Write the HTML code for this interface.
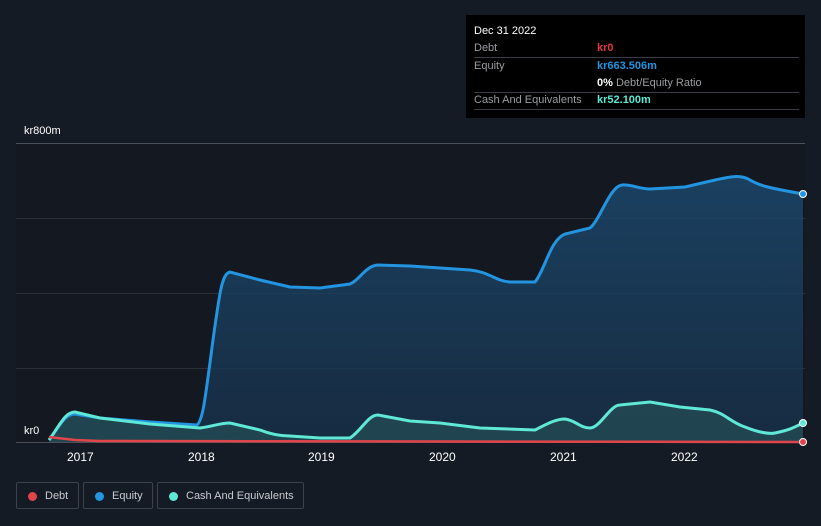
<!DOCTYPE html>
<html><head><meta charset="utf-8"><style>
html,body{margin:0;width:821px;height:526px;overflow:hidden}
body{background:#151b25;font-family:"Liberation Sans",sans-serif;position:relative}
.t{position:absolute;color:#fff;font-size:11px}
.tip{position:absolute;left:466px;top:15px;width:339px;height:103px;background:#000;}
.tip .r{position:absolute;left:8px;right:6px;height:17px;border-bottom:1px solid #3a3d44;font-size:11px;color:#9a9ca0;line-height:17px;white-space:nowrap}
.tip .v{position:absolute;left:123px}
.leg{position:absolute;top:482px;height:27px;border:1px solid #3c424c;border-radius:2px;color:#c8cad0;font-size:11px;line-height:26px;box-sizing:border-box;white-space:nowrap}
.leg i{position:absolute;left:11px;top:9px;width:9px;height:9px;border-radius:50%}
</style></head><body>
<svg width="821" height="526" style="position:absolute;left:0;top:0">
<rect x="16" y="144" width="789" height="298" fill="#131821"/>
<line x1="16" y1="143.5" x2="805" y2="143.5" stroke="#4a4f58"/>
<line x1="16" y1="218.5" x2="805" y2="218.5" stroke="#2a2f38"/>
<line x1="16" y1="293.5" x2="805" y2="293.5" stroke="#2a2f38"/>
<line x1="16" y1="368.5" x2="805" y2="368.5" stroke="#2a2f38"/>
<line x1="16" y1="442.5" x2="805" y2="442.5" stroke="#4a4f58"/>
<defs><linearGradient id="g" x1="0" y1="0" x2="0" y2="1"><stop offset="0" stop-color="#1c4a70" stop-opacity=".8"/><stop offset="1" stop-color="#173048" stop-opacity=".8"/></linearGradient></defs>
<path d="M49,440 C60,425 65,414 75,414 L100,418 L150,422 L197,425 C203,420 205,400 213,340 C220,290 222,274 230,272 L260,280 L290,287 L320,288 L350,284 C360,280 365,266 378,265 L410,266 L470,270 C490,272 495,281 510,282 L535,282 C545,270 550,240 565,234 L590,228 C600,220 610,186 622,185 C630,184 640,189 650,189 L685,187 L715,180 C730,177 740,174 750,180 C760,186 770,188 803,194 L803,442 L49,442 Z" fill="url(#g)"/>
<path d="M49,440 C60,425 65,412 75,412 L100,418 L150,424 L200,428 C215,426 220,423 230,423 L260,430 C270,434 280,436 290,436 L320,438 L350,438 C362,430 368,415 378,415 L410,421 L440,423 L480,428 L535,430 C545,425 555,419 565,419 C575,420 580,428 590,428 C600,428 610,405 620,405 L650,402 L680,407 L710,410 C725,413 730,422 745,427 C760,433 770,434 775,433 C790,430 795,427 803,423 L803,442 L49,442 Z" fill="#2a5a5c" fill-opacity=".55"/>
<path d="M49,440 C60,425 65,414 75,414 L100,418 L150,422 L197,425 C203,420 205,400 213,340 C220,290 222,274 230,272 L260,280 L290,287 L320,288 L350,284 C360,280 365,266 378,265 L410,266 L470,270 C490,272 495,281 510,282 L535,282 C545,270 550,240 565,234 L590,228 C600,220 610,186 622,185 C630,184 640,189 650,189 L685,187 L715,180 C730,177 740,174 750,180 C760,186 770,188 803,194" fill="none" stroke="#2394e0" stroke-width="3"/>
<path d="M49,440 C60,425 65,412 75,412 L100,418 L150,424 L200,428 C215,426 220,423 230,423 L260,430 C270,434 280,436 290,436 L320,438 L350,438 C362,430 368,415 378,415 L410,421 L440,423 L480,428 L535,430 C545,425 555,419 565,419 C575,420 580,428 590,428 C600,428 610,405 620,405 L650,402 L680,407 L710,410 C725,413 730,422 745,427 C760,433 770,434 775,433 C790,430 795,427 803,423" fill="none" stroke="#5ee8d5" stroke-width="3"/>
<path d="M49,437 L75,440 L100,441 L803,442" fill="none" stroke="#e0454a" stroke-width="2.5"/>
<circle cx="803" cy="194" r="3.5" fill="#2394e0" stroke="#fff" stroke-width="1"/>
<circle cx="803" cy="423" r="3.5" fill="#5ee8d5" stroke="#fff" stroke-width="1"/>
<circle cx="803" cy="442" r="3.5" fill="#e0454a" stroke="#fff" stroke-width="1"/>
</svg>
<div class="t" style="left:24px;top:125px">kr800m</div>
<div class="t" style="left:24px;top:425px">kr0</div>
<div class="t" style="left:67px;top:450px;font-size:12px">2017</div>
<div class="t" style="left:188px;top:450px;font-size:12px">2018</div>
<div class="t" style="left:308px;top:450px;font-size:12px">2019</div>
<div class="t" style="left:429px;top:450px;font-size:12px">2020</div>
<div class="t" style="left:550px;top:450px;font-size:12px">2021</div>
<div class="t" style="left:671px;top:450px;font-size:12px">2022</div>
<div class="tip">
<div style="position:absolute;left:8px;top:10px;color:#fff;font-size:11px">Dec 31 2022</div>
<div class="r" style="top:25px">Debt<span class="v" style="color:#e0383e;font-weight:bold">kr0</span></div>
<div class="r" style="top:43px;border:none">Equity<span class="v" style="color:#2394e0;font-weight:bold">kr663.506m</span></div>
<div class="r" style="top:60px"><span class="v"><b style="color:#fff">0%</b> Debt/Equity Ratio</span></div>
<div class="r" style="top:77px">Cash And Equivalents<span class="v" style="color:#5ee8d5;font-weight:bold">kr52.100m</span></div>
</div>
<div class="leg" style="left:16px;width:63px"><i style="background:#e0454a"></i><span style="position:absolute;left:28px">Debt</span></div>
<div class="leg" style="left:83px;width:70px"><i style="background:#2394e0"></i><span style="position:absolute;left:28px">Equity</span></div>
<div class="leg" style="left:157px;width:147px"><i style="background:#5ee8d5"></i><span style="position:absolute;left:28px">Cash And Equivalents</span></div>
</body></html>
